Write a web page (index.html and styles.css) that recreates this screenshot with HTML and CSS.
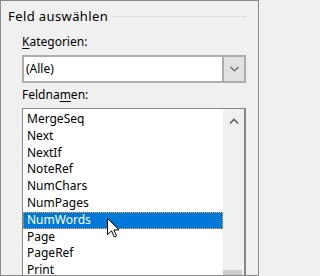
FILE: index.html
```html
<!DOCTYPE html>
<html lang="de">
<head>
<meta charset="utf-8">
<title>Feld auswählen</title>
<link rel="stylesheet" href="styles.css">
</head>
<body>
<div class="dialog">
  <div class="group-title">
    <span class="title-text">Feld auswählen</span>
    <span class="rule"></span>
  </div>
  <div class="content">
    <div class="label label-kat"><u>K</u>ategorien:</div>
    <div class="combo">
      <span class="combo-value">(Alle)</span>
      <span class="combo-btn">
        <svg width="9" height="6" viewBox="0 0 9 6"><path d="M0.5 0.8 L4.5 4.8 L8.5 0.8" fill="none" stroke="#505050" stroke-width="1.1"/></svg>
      </span>
    </div>
    <div class="label label-feld">Feldna<u>m</u>en:</div>
    <div class="listbox">
      <ul class="items">
        <li>MergeSeq</li>
        <li>Next</li>
        <li>NextIf</li>
        <li>NoteRef</li>
        <li>NumChars</li>
        <li>NumPages</li>
        <li class="selected">NumWords</li>
        <li>Page</li>
        <li>PageRef</li>
        <li>Print</li>
      </ul>
      <div class="scrollbar">
        <span class="scroll-up">
          <svg width="10" height="7" viewBox="0 0 10 7"><path d="M1 5.5 L5 1.5 L9 5.5" fill="none" stroke="#606060" stroke-width="1.6"/></svg>
        </span>
        <span class="thumb"></span>
      </div>
    </div>
  </div>
  <svg class="cursor" width="13" height="20" viewBox="0 0 13 20">
    <path d="M0.5 0.5 L0.5 16.5 L4.5 12.8 L7.3 19 L9.6 18 L6.9 11.9 L12 11.9 Z" fill="#ffffff" stroke="#000000" stroke-width="1"/>
  </svg>
</div>
</body>
</html>
```
FILE: styles.css
```css
html, body {
  margin: 0;
  padding: 0;
  background: #f0f0f0;
}

.dialog {
  position: relative;
  width: 259px;
  height: 276px;
  box-sizing: border-box;
  border: 1px solid #8a8a8a;
  background: #f0f0f0;
  overflow: hidden;
  font-family: "Noto Sans", "Open Sans", sans-serif;
  font-size: 12px;
  line-height: 16px;
  color: #000;
  padding: 7px 0 0 7px;
}

.group-title {
  display: flex;
  align-items: center;
  width: 238px;
}

.title-text {
  white-space: nowrap;
  font-size: 13px;
  letter-spacing: 0.4px;
}

.rule {
  flex: 1;
  height: 1px;
  background: #dcdcdc;
  margin-left: 4px;
  margin-top: 1px;
}

.content {
  padding-left: 14px;
  width: 224px;
}

.label u {
  text-decoration-thickness: 1px;
  text-underline-offset: 2px;
}

.label-kat {
  margin-top: 10px;
}

.combo {
  margin-top: 5px;
  height: 28px;
  box-sizing: border-box;
  border: 2px solid #adadad;
  background: #fff;
  display: flex;
  align-items: stretch;
}

.combo-value {
  flex: 1;
  padding-left: 2px;
  display: flex;
  align-items: center;
}

.combo-btn {
  width: 20px;
  background: #e1e1e1;
  border-left: 2px solid #adadad;
  display: flex;
  align-items: center;
  justify-content: center;
}

.label-feld {
  margin-top: 4px;
}

.listbox {
  margin-top: 5px;
  height: 200px;
  box-sizing: border-box;
  border: 1px solid #828790;
  border-right-width: 2px;
  background: #fff;
  display: flex;
}

.items {
  list-style: none;
  margin: 0;
  padding: 2px 0 0 0;
  width: 200px;
}

.items li {
  height: 16.8px;
  line-height: 16.8px;
  padding-left: 4px;
  box-sizing: border-box;
  white-space: nowrap;
}

.items li.selected {
  background: #0078d7;
  color: #fff;
  border: 1px dotted #f2a33a;
  padding-left: 3px;
  line-height: 14.8px;
}

.scrollbar {
  flex: 1;
  background: #f0f0f0;
  display: flex;
  flex-direction: column;
  align-items: center;
}

.scroll-up {
  height: 24px;
  display: flex;
  align-items: center;
  justify-content: center;
}

.thumb {
  width: 19px;
  height: 12px;
  background: #cdcdcd;
  margin-top: 137px;
  align-self: flex-start;
}

.cursor {
  position: absolute;
  left: 106px;
  top: 217px;
}
```
